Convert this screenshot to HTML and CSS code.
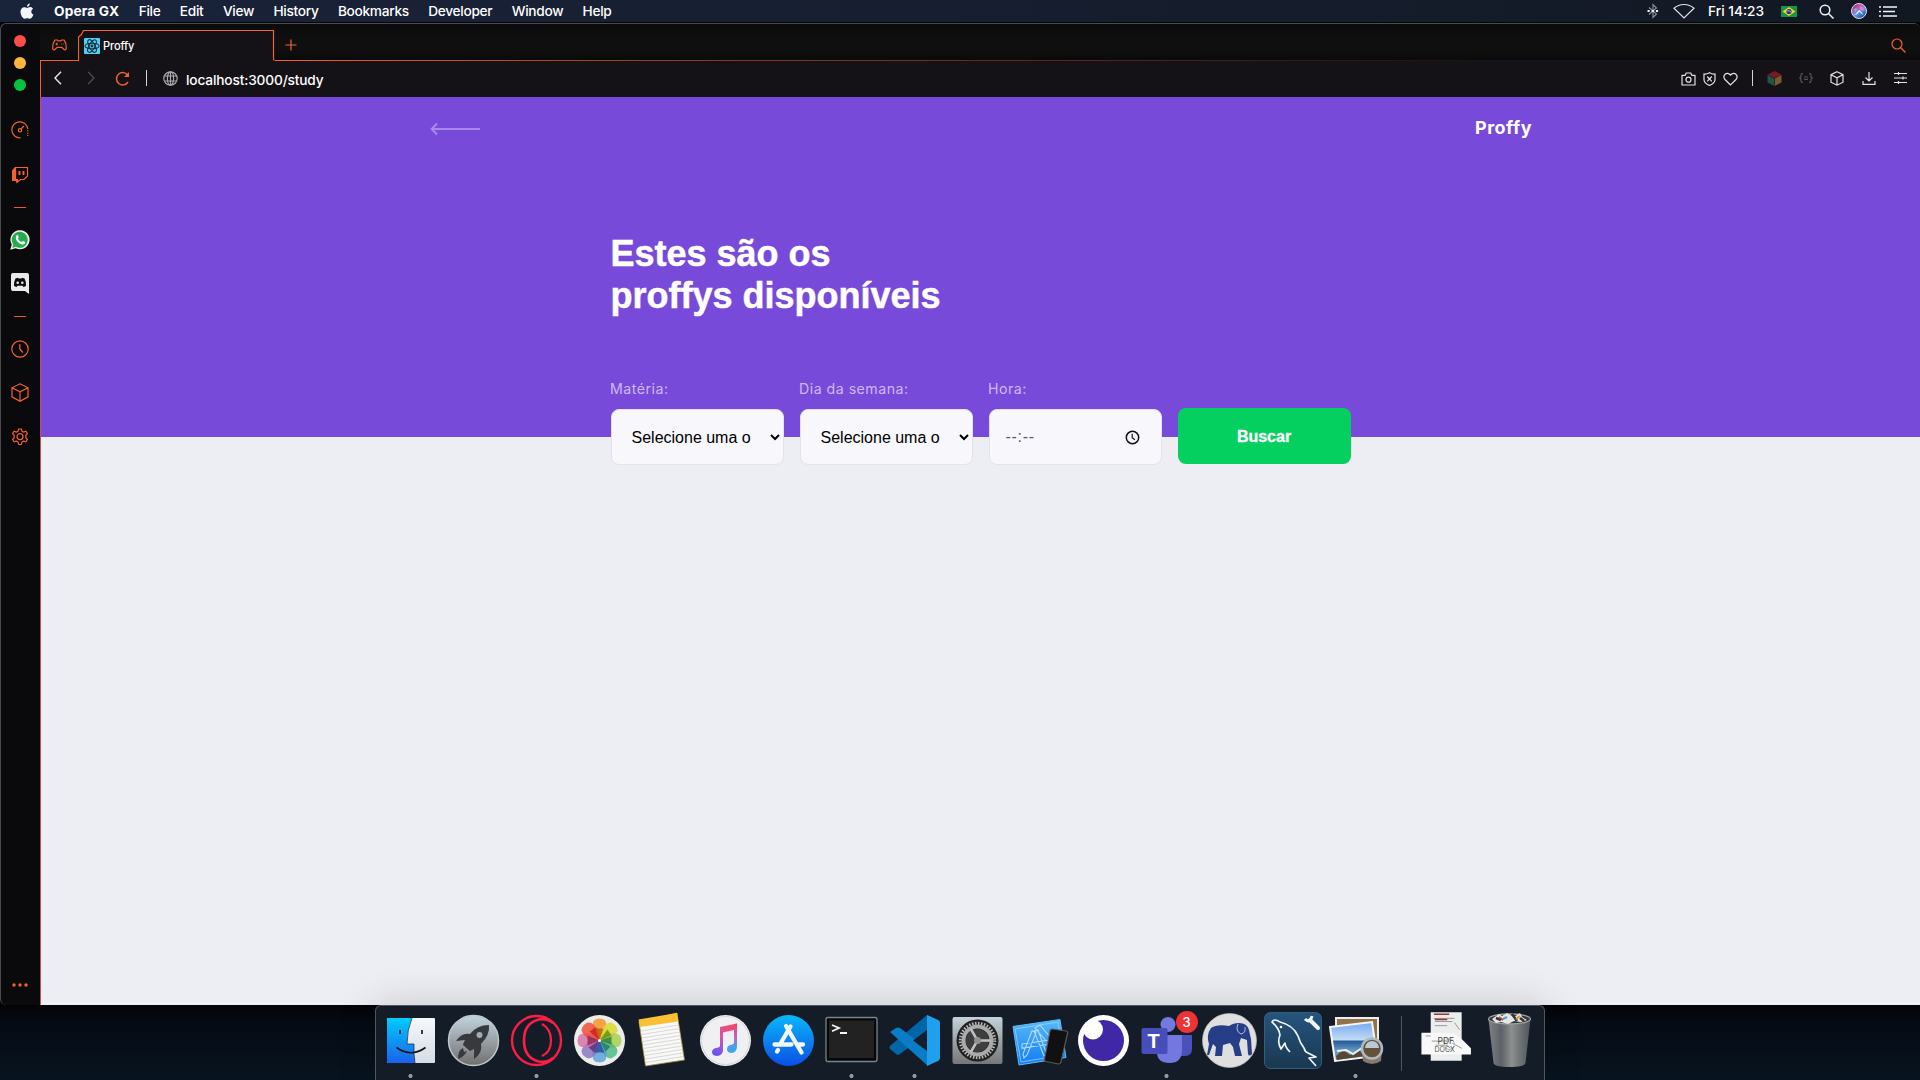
FILE: index.html
```html
<!DOCTYPE html>
<html lang="pt-BR">
<head>
<meta charset="utf-8">
<title>Proffy</title>
<link rel="stylesheet" href="styles.css">
</head>
<body>
<div class="menubar">
  <svg class="apple" width="14" height="17" viewBox="0 0 14 17"><path fill="#f2f4f8" d="M9.8.5c.1 1.600-1.200 3.200-2.800 3.300C6.800 2.200 8.300.7 9.800.5zM7.100 4.900c.7 0 1.700-.8 3-.8 1.200 0 2.300.7 2.900 1.600-2.500 1.500-2.100 4.900.5 5.900-.6 1.700-2 4.200-3.500 4.200-1 0-1.500-.6-2.700-.6s-1.700.6-2.700.6C2.700 15.900.5 12 .5 8.800.5 6 2.200 4.200 4.200 4.200c1.200 0 2.200.7 2.900.7z"/></svg>
  <b class="app">Opera GX</b><span>File</span><span>Edit</span><span>View</span><span>History</span><span>Bookmarks</span><span>Developer</span><span>Window</span><span>Help</span>
  <div class="status">
    <svg width="12" height="16" viewBox="0 0 12 16" fill="none" stroke="#8d93a0" stroke-width="1.100"><path d="M2 4.500 9.500 11 6 14.500v-13L9.500 5 2 11.500"/><path d="M.5 8h11" stroke="#f0f2f6" stroke-width="2.200" stroke-dasharray="2.200 2"/></svg>
    <svg class="wifi" width="22" height="16" viewBox="0 0 22 16" fill="none" stroke="#dfe3ea" stroke-width="1.200"><path d="M1 5.300C6.500.2 15.500.2 21 5.300L11 15z"/></svg>
    <span class="clock">Fri 14:23</span>
    <svg class="flag" width="16" height="11" viewBox="0 0 16 11"><path fill="#169447" d="M0 0h16v11H0z"/><path fill="#f5d22d" d="m8 1 6.500 4.500L8 10 1.500 5.500z"/><circle cx="8" cy="5.500" r="2.600" fill="#21357e"/><path d="M5.600 4.800q3-.5 4.800 1.500" stroke="#dfe6ee" stroke-width=".7" fill="none"/></svg>
    <svg class="find" width="15" height="15" viewBox="0 0 15 15" fill="none" stroke="#f0f2f6" stroke-width="1.500"><circle cx="6" cy="6" r="4.800"/><path d="m9.500 9.500 5 5"/></svg>
    <svg class="siri" width="16" height="16" viewBox="0 0 16 16"><defs><linearGradient id="si" x1="0" y1="0" x2=".8" y2="1"><stop stop-color="#2a325e"/><stop offset=".35" stop-color="#d848ae"/><stop offset=".6" stop-color="#4ca4e8"/><stop offset="1" stop-color="#2a3a8c"/></linearGradient></defs><circle cx="8" cy="8" r="7.500" fill="url(#si)" stroke="#d9dce6"/><path d="M3 12q3-2 5-5 3 2 4.500 5-2-1-4-3.500-2 3-5.500 3.500z" fill="#fff" opacity=".95"/><path d="M9 3q4 1 4.500 5L9 7z" fill="#f078c0"/><path d="M2.500 6q2-1 4 0l-2 3z" fill="#3ed2e6"/></svg>
    <svg width="18" height="11" viewBox="0 0 18 11" stroke="#f4f6fa" stroke-width="1.700"><path d="M0 1h2M4 1h14M0 5.500h2M4 5.500h12M0 10h2M4 10h14"/></svg>
  </div>
</div>

<div class="window">
  <aside class="side">
    <div class="lights"><i class="red"></i><i class="yellow"></i><i class="green"></i></div>
    <svg class="s1" width="18" height="18" viewBox="0 0 18 18"><path d="M9.500 16.800A8 8 0 1 1 16.800 8"/><path d="M16.800 9v6" stroke-dasharray="1.200 1.300"/><circle cx="9" cy="9.300" r="1.700"/><path d="m10.200 8 2.600-3"/></svg>
    <svg class="s2" width="18" height="18" viewBox="0 0 18 18"><path d="M4.500 1.500h12v8.500l-3.500 3.500H9.500L6.500 16v-2.500h-2z"/><path fill="#f2622f" stroke="none" d="M1 4.500 4 1v12.500h2V16l-1 1.500V15H1z"/><path d="M8.500 5v4M12.500 5v4" stroke-width="1.900"/></svg>
    <i class="dash d1"></i>
    <svg class="s3" width="20" height="20" viewBox="0 0 20 20" stroke="none"><path fill="#eee" d="M.3 19.700 1.700 14.600A9.600 9.600 0 1 1 5.600 18.300z"/><path fill="#27ab50" d="m2.300 17.700.9-3.300A8 8 0 1 1 5.900 16.800z"/><path fill="#fff" d="M6.600 5.200c.4-.4 1.100-.4 1.300 0l.9 2c.1.400-.6 1-.9 1.400.9 1.700 2 2.800 3.800 3.500.4-.4.900-1.300 1.300-1.100l2 1c.5.400-.2 1.700-.8 2.100-3.600 2.200-10.800-4.800-7.600-8.900z"/></svg>
    <svg class="s4" width="18" height="21" viewBox="0 0 18 21" stroke="none"><path fill="#e9e9eb" d="M2 0h14q2 0 2 2v19l-4-3H2q-2 0-2-2V2Q0 0 2 0z"/><path fill="#0a0a0c" d="M4.500 5.500 7 4.700l.5.800h3l.5-.8 2.500.8Q15.500 9 15 13l-2.500 1-1-1.200h-5l-1 1.200L3 13Q2.500 9 4.500 5.500z"/><circle cx="6.700" cy="9.700" r="1.300" fill="#e9e9eb"/><circle cx="11.300" cy="9.700" r="1.300" fill="#e9e9eb"/></svg>
    <i class="dash d2"></i>
    <svg class="s5" width="18" height="18" viewBox="0 0 18 18"><circle cx="9" cy="9" r="8.200"/><path d="M8.800 4v5l3 3.500"/></svg>
    <svg class="s6" width="18" height="19" viewBox="0 0 18 19"><path d="m9 .8 8 4v9l-8 4.400-8-4.400v-9zM1 4.800l8 4.100 8-4.100M9 9v9"/></svg>
    <svg class="s7" width="18" height="18" viewBox="0 0 18 18"><path d="M7.600 1h2.800l.5 2.200 1.800.9 2.100-.9 1.600 2.300-1.500 1.700v2.600l1.500 1.700-1.600 2.300-2.100-.7-1.800.9-.5 2.500H7.600l-.5-2.500-1.800-.9-2.100.7-1.600-2.300 1.500-1.700V7.200L1.600 5.500l1.600-2.300 2.100.9 1.800-.9z" stroke-linejoin="round"/><circle cx="9" cy="8.700" r="3"/></svg>
    <svg class="more" width="18" height="4" viewBox="0 0 18 4"><g fill="#f2622f" stroke="none"><circle cx="3" cy="2" r="1.700"/><circle cx="9" cy="2" r="1.700"/><circle cx="15" cy="2" r="1.700"/></g></svg>
  </aside>
  <main class="browser">
    <div class="tabs">
      <div class="pad"><svg width="15" height="12" viewBox="0 0 15 12"><path d="M3 1h2.500l.7.8h2.600l.7-.8H12q2.500 3 2.300 8.500-.8 2.500-2.800.5L9.800 8.300H5.200L3.500 10Q1.500 12 .7 9.500.5 4 3 1z"/><path d="M3.500 5h2.400M4.700 3.800v2.400M9.300 5h.8M11.300 5h.6"/></svg></div>
      <div class="tab">
        <svg class="edge" width="197" height="31" viewBox="0 0 197 31"><path fill="#151217" stroke="none" d="M.5 31V6.500l5-6h191V31z"/><path d="M.5 31V7Q4 5 5.500.5h190V28q0 2 1 2.500"/></svg>
        <svg class="react" width="16" height="16" viewBox="0 0 16 16"><rect width="16" height="16" rx="1" fill="#50d0f5" stroke="none"/><g fill="none" stroke="#18323e" stroke-width="1.100"><ellipse cx="8" cy="8" rx="7" ry="2.800"/><ellipse cx="8" cy="8" rx="7" ry="2.800" transform="rotate(60 8 8)"/><ellipse cx="8" cy="8" rx="7" ry="2.800" transform="rotate(120 8 8)"/></g><circle cx="8" cy="8" r="1.400" fill="#18323e" stroke="none"/></svg>
        <span>Proffy</span>
      </div>
      <div class="rest"><svg class="plus" width="12" height="12" viewBox="0 0 12 12"><path d="M6 .5v11M.5 6h11"/></svg><svg class="tabfind" width="15" height="15" viewBox="0 0 15 15"><circle cx="6" cy="6" r="5"/><path d="m9.500 9.500 5 5"/></svg></div>
    </div>
    <div class="address">
      <svg class="back" width="8" height="14" viewBox="0 0 8 14"><path d="M7 .8 1 7l6 6.200" stroke-width="1.500"/></svg>
      <svg class="fwd" width="8" height="14" viewBox="0 0 8 14"><path d="m1 .8 6 6.200-6 6.200" stroke="#55525a"/></svg>
      <svg class="reload" width="15" height="15" viewBox="0 0 15 15"><path d="M13 4.500A6.200 6.200 0 1 0 13 11" stroke="#f2622f" stroke-width="1.500"/><path d="M14 1v5H9z" fill="#f2622f" stroke="none"/></svg>
      <i class="bar"></i>
      <svg class="globe" width="15" height="15" viewBox="0 0 15 15"><g stroke="#aaa8ad"><circle cx="7.500" cy="7.500" r="6.700"/><ellipse cx="7.500" cy="7.500" rx="3.100" ry="6.700"/><path d="M1.500 5h12M1.500 10h12M7.500 1v13"/></g></svg>
      <span class="url">localhost:3000/study</span>
      <div class="tools">
        <svg width="15" height="14" viewBox="0 0 15 14"><path d="M1 3.300h3.200l1-2.300h4.600l1 2.300H14V13H1z" stroke-linejoin="round"/><circle cx="7.500" cy="7.700" r="2.500"/></svg>
        <svg class="shield" width="13" height="14" viewBox="0 0 13 14"><path d="M6.500.7q3 1.700 5.500 1.300v6Q11.500 11.500 6.500 13.400 1.500 11.500 1 8V2Q3.500 2.400 6.500.7zM4.200 4.500l4.600 4.800M8.800 4.500 4.200 9.300" stroke-width="1.200"/></svg>
        <svg class="heart" width="15" height="14" viewBox="0 0 15 14"><path d="M7.500 13 2 7.500C-1 4 3.500-1.500 7.500 3 11.500-1.500 16 4 13 7.500z" stroke-width="1.200"/></svg>
        <i class="bar"></i>
        <svg class="cube" width="15" height="15" viewBox="0 0 15 15" stroke="none"><path fill="#741b27" d="m7.500 0 7 3.500-7 3.700L.5 3.500z"/><path fill="#205449" d="m.5 4 6.700 3.500V15L.5 11.500z"/><path fill="#775931" d="M14.500 4 7.800 7.500V15l6.700-3.500z"/></svg>
        <svg class="brace" width="14" height="10" viewBox="0 0 14 10"><path d="M4 .7H3q-1 0-1 1.300v2L.7 5 2 6v2q0 1.300 1 1.300h1M10 .7h1q1 0 1 1.300v2l1.300 1L12 6v2q0 1.300-1 1.300h-1M5 4h4M5 6.300h4" stroke="#55535a"/></svg>
        <svg class="box" width="14" height="15" viewBox="0 0 14 15"><path d="m7 .7 6 3v7.500l-6 3-6-3V3.700zM1 3.700l6 3.200 6-3.200M7 7v7"/></svg>
        <svg class="down" width="14" height="13" viewBox="0 0 14 13"><path d="M7 0v9M3.500 5.500 7 9l3.500-3.500M1 9v3.400h12V9"/></svg>
        <svg class="sliders" width="13" height="12" viewBox="0 0 13 12"><path d="M0 1.500h13M0 6h13M0 10.500h13M4.500 0v3M9 4.500v3M4.500 9v3"/></svg>
      </div>
    </div>
    <div class="page">
      <header class="hero">
        <div class="topbar">
          <svg width="50" height="14" viewBox="0 0 50 14"><path d="M50 7H2M7 1.500 1.700 7 7 12.500" fill="none" stroke="#a78ae8" stroke-width="2"/></svg>
          <span class="logo">Proffy</span>
        </div>
        <div class="content">
          <h1>Estes são os<br>proffys disponíveis</h1>
          <form class="filters">
            <label>Matéria:<select><option>Selecione uma opção</option></select></label>
            <label>Dia da semana:<select><option>Selecione uma opção</option></select></label>
            <label>Hora:<span class="time"><span>--:--</span><svg width="15" height="15" viewBox="0 0 15 15" fill="none" stroke="#111" stroke-width="1.500"><circle cx="7.500" cy="7.500" r="6.200"/><path d="M7.200 3.800v4l2.700 1.900" stroke-width="1.200"/></svg></span></label>
            <button type="button">Buscar</button>
          </form>
        </div>
      </header>
    </div>
  </main>
</div>

<div class="dock">
  <svg class="ic run" viewBox="0 0 63 75"><defs><linearGradient id="f1" x1="0" y1="0" x2="0" y2="1"><stop stop-color="#00cdfc"/><stop offset="1" stop-color="#1a62ec"/></linearGradient><linearGradient id="gr" x1="0" y1="0" x2="0" y2="1"><stop stop-color="#f6f8fb"/><stop offset="1" stop-color="#d5dce6"/></linearGradient></defs><rect x="8" y="13" width="48" height="45" rx="1" fill="url(#gr)"/><path d="M9 13h24q-5 12-5 26h7q-.5 10 1 19H9q-1 0-1-1V14q0-1 1-1z" fill="url(#f1)"/><path d="M33 13q-5 12-5 26h7q-.5 10 1 19" fill="none" stroke="#235" stroke-width=".8"/><path d="M21 25v4M43 25v4" stroke="#122" stroke-width="1.700"/><path d="M17.500 42.500q14.500 10.500 29 0" fill="none" stroke="#111" stroke-width="1.700"/></svg>
  <svg class="ic" viewBox="0 0 63 75"><defs><linearGradient id="lp" x1="0" y1="0" x2="0" y2="1"><stop stop-color="#c0d4de"/><stop offset=".5" stop-color="#9aa2a5"/><stop offset="1" stop-color="#70706e"/></linearGradient></defs><circle cx="31.500" cy="35.500" r="25" fill="url(#lp)" stroke="#bfc7ca" stroke-width="1.500"/><path fill="#37393c" d="M47 20q-12 0-19 9-8-2-14 7l9-1q-2 4-2 5l7 6 4-2 0 10q9-6 7-15 9-9 8-19zM21 43q-5 2-5 11 7-3 9-8l-3 1z"/><circle cx="37.500" cy="30" r="3" fill="#a3acb0"/></svg>
  <svg class="ic run" viewBox="0 0 63 75" fill="none" stroke="#fa1e44"><circle cx="31.500" cy="35.500" r="24.500" stroke-width="2.400"/><path d="M48 18Q42 13 34 14.500 19 18 19 35.500T34 56.500Q42 58 48 53" stroke-width="2.700"/><path d="M37 19Q46 24 46 35.500T37 51" stroke-width="2.200"/></svg>
  <svg class="ic" viewBox="0 0 63 75"><circle cx="31.500" cy="35.500" r="25.500" fill="#ececea"/><g transform="translate(31.500 35.500)"><path fill="#f79a34" opacity=".9" d="M0 0-7-8v-7q0-7 7-7t7 7v7z"/><path fill="#dbdc35" opacity=".9" transform="rotate(45)" d="M0 0-7-8v-7q0-7 7-7t7 7v7z"/><path fill="#a5ce48" opacity=".8" transform="rotate(90)" d="M0 0-7-8v-7q0-7 7-7t7 7v7z"/><path fill="#48b87b" opacity=".8" transform="rotate(135)" d="M0 0-7-8v-7q0-7 7-7t7 7v7z"/><path fill="#559fdc" opacity=".8" transform="rotate(180)" d="M0 0-7-8v-7q0-7 7-7t7 7v7z"/><path fill="#8870c0" opacity=".8" transform="rotate(225)" d="M0 0-7-8v-7q0-7 7-7t7 7v7z"/><path fill="#d46da5" opacity=".8" transform="rotate(270)" d="M0 0-7-8v-7q0-7 7-7t7 7v7z"/><path fill="#ef503f" opacity=".85" transform="rotate(315)" d="M0 0-7-8v-7q0-7 7-7t7 7v7z"/><g opacity=".8"><path fill="#d51b12" d="M0 0-4-13-10-9z"/><path fill="#b8620f" d="M0 0 4-12-4-12z"/><path fill="#5a8f1c" d="m0 0 12-5-4-6z"/><path fill="#2b7d36" d="m0 0 12-4v8z"/><path fill="#24776c" d="m0 0 11 6-5 5z"/><path fill="#2c4d98" d="m0 0 5 12h-10z"/><path fill="#50347c" d="m0 0-5 12-6-5z"/><path fill="#8b2857" d="m0 0-12 5v-10z"/></g><circle r="1.500" fill="#fff"/></g></svg>
  <svg class="ic" viewBox="0 0 63 75"><path fill="#f8f8f6" stroke="#a68c38" stroke-width=".8" d="m8 17 38-9 7.500 47-39 6z"/><path fill="#fac033" d="m7.500 14.500 38.500-6.500 1.300 8.500L9 22z"/><path stroke="#cfcfd1" stroke-width=".8" d="m10 26 38-6M10.500 29.500l38-6M11 33l38-6M11.500 36.500l38-6M12 40l38-6M12.500 43.500l38-6M13 47l38-6M13.500 50.500l38-6M14 54l38-6M14.300 57.500l38-6"/></svg>
  <svg class="ic" viewBox="0 0 63 75"><defs><linearGradient id="mu" x1=".8" y1="0" x2=".3" y2="1"><stop stop-color="#f94664"/><stop offset=".5" stop-color="#d455a9"/><stop offset="1" stop-color="#6b55f5"/></linearGradient><linearGradient id="mr" x1="0" y1="0" x2="0" y2="1"><stop stop-color="#f34464"/><stop offset=".45" stop-color="#c560c0"/><stop offset=".8" stop-color="#3fa6ee"/></linearGradient></defs><circle cx="31.500" cy="35.500" r="25.500" fill="#f0f0f2"/><circle cx="31.500" cy="35.500" r="24" fill="none" stroke="#d3d4da"/><path fill="url(#mu)" d="m26 22 17-3.500v5.800L29 27.500V45q0 5-5.500 6-5.500 0-5.500-4 0-3.500 5-4.300 3-.3 3-2.200z"/><path fill="url(#mr)" d="M40 19.200 43 18.500V41q0 6-5 7-5 0-5-4 0-3.500 4.500-4.200 2.500-.3 2.500-2z"/></svg>
  <svg class="ic" viewBox="0 0 63 75"><defs><linearGradient id="as" x1="0" y1="0" x2="0" y2="1"><stop stop-color="#09b8fb"/><stop offset="1" stop-color="#0b4fe5"/></linearGradient></defs><circle cx="31.500" cy="35.500" r="25.500" fill="url(#as)"/><path fill="none" stroke="#f3f6fb" stroke-width="4.300" stroke-linecap="round" d="m33.500 21.500-10 17M29 21l15.500 26.500M17.500 39.500h17M41 39.500h5M21 45l-1 1.500"/></svg>
  <svg class="ic run" viewBox="0 0 63 75"><rect x="6" y="12.500" width="51" height="44" rx="2" fill="#060708" stroke="#798587" stroke-width="1.300"/><rect x="9" y="15.500" width="45" height="37.500" fill="#222"/><path fill="none" stroke="#f5f5f5" stroke-width="1.800" d="m12 20 7 3-7 3.200M20 28h7"/></svg>
  <svg class="ic run" viewBox="0 0 63 75"><path fill="#0066a7" d="m44 10 13 6-13 13-27 20q-2 2-4 0l-6-5q-1-2 0-3z"/><path fill="#0b7cc8" d="m7 27 6-4q2-1 4 0L45 44v17z"/><path fill="#20a0ec" d="m44 10 11 5q2 1 2 3v35q0 2-2 3l-11 5z"/><path fill="#151e2a" d="M44 25v21L30 35.500z"/></svg>
  <svg class="ic" viewBox="0 0 63 75"><defs><linearGradient id="se" x1="0" y1="0" x2="0" y2="1"><stop stop-color="#c2d2d9"/><stop offset="1" stop-color="#777"/></linearGradient></defs><rect x="6.500" y="12" width="50" height="47" rx="2" fill="url(#se)"/><circle cx="31.500" cy="35.500" r="21" fill="#202122"/><circle cx="31.500" cy="35.500" r="17.200" fill="none" stroke="#bbb" stroke-width="3" stroke-dasharray="1.500 1.500"/><circle cx="31.500" cy="35.500" r="14" fill="none" stroke="#aaa" stroke-width="4"/><circle cx="31.500" cy="35.500" r="11.500" fill="#3d3e3f"/><path stroke="#c0c0c0" stroke-width="2.500" d="M31.500 35.500h13M31.500 35.500l-7-12M31.500 35.500l-7 12"/><circle cx="31.500" cy="35.500" r="3.500" fill="#919191"/></svg>
  <svg class="ic" viewBox="0 0 63 75"><defs><linearGradient id="xc" x1="0" y1="0" x2="0" y2="1"><stop stop-color="#55bbf8"/><stop offset="1" stop-color="#147bf4"/></linearGradient></defs><path fill="url(#xc)" stroke="#57bcff" d="m4 21.500 47-7 6 38-47 7.500z"/><path d="m6 24 43-7 5 33-42 7z" fill="none" stroke="#a5d7ff" stroke-width=".7"/><g fill="none" stroke="#b0daff" stroke-width="1.100"><path d="m25 26 4-1 9 25-3 1zM27 28 18 50l-3 3-1-4 9-23 4 1zM13 39l29-4v4l-29 4zM26 23l5-3 18 22-4 3z"/></g><path fill="#111" stroke="#5d5653" stroke-width="1.200" d="m43 24 14 2q2 .5 1.500 2.500L52 57q-.5 2-2.500 2L37 56.500q-2-.5-1.500-2.500L41 26q.5-2 2-2z"/></svg>
  <svg class="ic" viewBox="0 0 63 75"><circle cx="31.500" cy="35.500" r="25.500" fill="#fff"/><circle cx="31.500" cy="35.500" r="20.500" fill="#4027a5"/><circle cx="21" cy="24.500" r="10" fill="#fff"/></svg>
  <div class="ic run teams"><svg viewBox="0 0 63 75"><path fill="#4a51bd" d="M40 30h17v14q0 7-7 7H40z"/><circle cx="33" cy="19.500" r="7.500" fill="#7479df"/><path fill="#7378e0" d="M25 30h22v15q0 13-12.500 13T22 47z"/><rect x="6.500" y="23" width="26" height="26" rx="2" fill="#474dba"/></svg><b>T</b><em>3</em></div>
  <svg class="ic" viewBox="0 0 63 75"><circle cx="31.500" cy="35.500" r="27" fill="#dfdfe0" stroke="#bbb" stroke-width=".7"/><path fill="#263d88" d="M13 23q6-4 18-2 4-3 10-3 8 0 10 7 1 5 2 9l1 15q-3 3-4 0l-1-14-6-2-2 6 3 12h-7l-2-9-3-4-7 2-1 11h-7l1-9-3-3-4 11H9l2-11q-3-9 2-16z"/><path d="M40 19q-3 7 3 10 5-1 4-7" fill="none" stroke="#dde" stroke-width=".8"/></svg>
  <svg class="ic" viewBox="0 0 63 75"><defs><linearGradient id="my" x1="0" y1="0" x2="0" y2="1"><stop stop-color="#26547e"/><stop offset="1" stop-color="#193850"/></linearGradient></defs><rect x="3.500" y="7.500" width="57" height="56" rx="6" fill="url(#my)" stroke="#316180"/><path fill="none" stroke="#edf4f8" stroke-width="1.700" stroke-linejoin="round" d="M29 47q-5-5-5-9l-4 6q-4-7-1-14-1-7-8-13 2-4 8 0 13 3 18 14 2 7 6 12 1 4 4 5l8 4-7 1 7 8"/><circle cx="20" cy="22" r="1.300" fill="#fff"/><path d="m49 15 8 8" stroke="#eef4f8" stroke-width="4" stroke-linecap="round"/><path fill="none" stroke="#eef4f8" stroke-width="3" d="M44 14q5 5 7-3"/></svg>
  <svg class="ic run" viewBox="0 0 63 75"><defs><linearGradient id="pv" x1="0" y1="0" x2="0" y2="1"><stop stop-color="#73a9f1"/><stop offset=".45" stop-color="#c0daf4"/><stop offset=".5" stop-color="#285c9b"/><stop offset=".75" stop-color="#6ba0c5"/><stop offset="1" stop-color="#8a8071"/></linearGradient></defs><path fill="#917347" stroke="#eee" stroke-width="2" d="M12 13h42v36H12z"/><path fill="url(#pv)" stroke="#f5f5f5" stroke-width="2" d="m6 22 42-5 5 34-42 5z"/><path d="m12 51 7-6 7 5 9-5 6 6-28 4z" fill="#54463a"/><path d="m13 46 9-1 7 4 9-6" stroke="#eee" fill="none" stroke-width="2"/><path d="M38 45h20l-1 11q-9 6-18 0z" fill="#88776a"/><circle cx="48" cy="43.500" r="10" fill="#66503c" stroke="#aebac1" stroke-width="2.500"/><path d="M41 43a7 7 0 0 1 14 0z" fill="#b9c9d6"/></svg>
  <i class="sep"></i>
  <div class="ic docs"><svg viewBox="0 0 63 75"><path fill="#eceded" d="M23 7h30v47H23z"/><path fill="#f8f8f8" d="M14 27h31l7 5 10 10v6H14z"/><path d="M26 13h20M27 16h17M27 20h12M18 30h5M24 35h16M28 39h12M44 37l9 5M46 17l5 7" stroke="#888" stroke-width=".8"/><path d="M26 9h15M27 14h12" stroke="#963737" stroke-width="1.500"/><circle cx="41" cy="38" r="5" fill="none" stroke="#bbb"/></svg><span>PDF</span><small>DOCX</small></div>
  <svg class="ic" viewBox="0 0 63 75"><defs><linearGradient id="tr"><stop stop-color="#8b8d8f"/><stop offset=".3" stop-color="#65696c"/><stop offset=".55" stop-color="#9a9b9b"/><stop offset="1" stop-color="#565a5d"/></linearGradient></defs><path fill="url(#tr)" d="m10.500 14 5 44q1 4 16 4t16-4l5-44z" opacity=".9"/><ellipse cx="31.500" cy="14" rx="21" ry="5" fill="#34383b" stroke="#9da0a1" stroke-width="1.300"/><path fill="#e6e6e4" d="m14 14 7-5 3 2 5-3 7 4 6-4 2 4 5 3-6 2-7-1-6 3-7-2-5 1z"/><path d="m18 13 5 2M34 9l5 7M42 13l4 3" stroke="#333" stroke-width="2.500"/><path d="m21 12 4 3" stroke="#c64237" stroke-width="2"/><path d="m25 14 4-2" stroke="#42a8d5" stroke-width="2"/><path d="m38 14 4-3" stroke="#d99a38" stroke-width="2"/></svg>
</div>
</body>
</html>
```
FILE: styles.css
```css
* { box-sizing: border-box; }
body { margin: 0; width: 1920px; height: 1080px; overflow: hidden; position: relative; background: linear-gradient(#020305 1005px, #050a12 1020px, #071420 1080px); font-family: Inter, "Liberation Sans", sans-serif; color: #fff; }
svg { display: block; flex: none; }
i { display: block; flex: none; }

.menubar { height: 23px; background: linear-gradient(90deg, #19233a, #151c2b 70%, #121822); display: flex; align-items: center; padding-left: 20px; font-size: 13.7px; font-weight: 500; letter-spacing: -.3px; gap: 19.4px; border-bottom: 1px solid #050609; }
.menubar .app { font-weight: 700; letter-spacing: .15px; margin-left: .6px; }
.status { margin-left: auto; display: flex; align-items: center; padding-right: 23px; letter-spacing: 0; }
.wifi { margin-left: 14px; }
.clock { margin-left: 13px; width: 58px; white-space: nowrap; }
.flag { margin-left: 15px; }
.find { margin-left: 22px; }
.siri { margin: 0 12px 0 17px; }

.window { height: 982px; background: #0a0a0c; border: 1px solid #484a4b; border-right-width: 0; border-bottom: 0; border-radius: 6px 6px 0 6px; display: flex; overflow: hidden; }
.side { width: 39px; padding-right: 2px; display: flex; flex-direction: column; align-items: center; }
.side svg, .tabs svg, .address svg { fill: none; stroke: #f2622f; stroke-width: 1.2; }
.side svg.s3, .side svg.s4, .address svg.cube { stroke: none; }
.lights { display: flex; flex-direction: column; gap: 10px; padding-top: 11px; }
.lights i { width: 12px; height: 12px; border-radius: 50%; }
.red { background: #ff4e4a; } .yellow { background: #fdb63c; } .green { background: #02c440; }
.s1 { margin-top: 30px; }
.s2 { margin-top: 27px; }
.dash { width: 12px; height: 1px; background: #e85b2c; }
.d1 { margin-top: 23px; }
.s3 { margin-top: 22px; }
.s4 { margin-top: 23px; }
.d2 { margin-top: 22px; }
.s5 { margin-top: 23px; }
.s6 { margin-top: 25px; }
.s7 { margin-top: 26px; }
.more { margin: auto 0 18px; }

.browser { flex: 1; display: flex; flex-direction: column; min-width: 0; }
.tabs { height: 37px; display: flex; background: linear-gradient(#0b0b0c, #101011 60%, #0a0a0a); }
.pad { width: 38px; border-bottom: 1px solid #f2622f; padding: 15px 0 0 12px; }
.tab { width: 197px; position: relative; display: flex; align-items: center; padding: 6px 0 0 6px; gap: 3px; font-size: 11.1px; font-weight: 500; letter-spacing: -.15px; }
.tab .edge { position: absolute; left: 0; top: 6px; }
.tab .react { position: relative; }
.tab span { position: relative; }
.rest { flex: 1; display: flex; justify-content: space-between; padding: 14px 14px 0 10px; border-bottom: 1px solid; border-image: linear-gradient(90deg, #f2622f, #8a3c20 25%, #151217 75%) 1; }
.plus { margin-top: 1px; }
.address { height: 36px; background: #151217; border-left: 1px solid #f2622f; display: flex; align-items: center; padding: 0 13px 2px 13px; }
.address svg { stroke: #e2e1e6; }
.fwd { margin-left: 25px; }
.reload { margin-left: 20px; }
.bar { width: 1px; height: 16px; background: #d6d4d9; }
.address > .bar { margin: 0 16px 0 16px; }
.globe { margin-top: 1px; }
.url { margin-left: 8px; font-size: 13.7px; font-weight: 500; letter-spacing: -.15px; padding-top: 3px; }
.tools { margin-left: auto; display: flex; align-items: center; }
.tools svg:first-child, .shield, .heart { margin-top: 1px; }
.shield { margin-left: 7px; }
.heart { margin-left: 7px; }
.tools .bar { margin: 0 14px 0 14px; }
.brace { margin-left: 17px; }
.box { margin-left: 17px; }
.down { margin-left: 18px; }
.sliders { margin-left: 18px; }

.page { flex: 1; background: #edeef3; border-left: 1px solid #c05055; }
.hero { height: 340px; background: #774ad9; }
.topbar { width: 1101px; margin: 0 auto; padding-top: 20px; height: 44px; display: flex; justify-content: space-between; align-items: center; }
.logo { font: 700 18px/24px Inter, sans-serif; letter-spacing: .5px; padding-bottom: 2px; margin-right: -1px; }
.content { width: 740px; margin: 0 auto; padding-top: 92px; }
h1 { margin: 0; font: 700 36px/42px "Liberation Sans", sans-serif; height: 84px; -webkit-text-stroke: .5px #fff; }
.filters { margin-top: 62px; display: grid; grid-template-columns: repeat(4, 173px); column-gap: 16px; align-items: end; }
label { font: 400 14.2px/20px Inter, sans-serif; color: #cdb8f4; letter-spacing: .48px; white-space: nowrap; margin-left: -.5px; }
select, .time { display: flex; width: 173px; height: 56px; margin: 10px 0 0 .5px; border: 1px solid #e3e2ee; border-radius: 8px; background: #f7f7fc; color: #000; font: 16px "Liberation Sans", sans-serif; padding: 0 16px; letter-spacing: 0; }
.time { align-items: center; justify-content: space-between; padding-right: 21px; color: #5f5670; letter-spacing: .7px; }
button { height: 56px; border: 0; padding: 2px 0 0; margin-bottom: 1px; border-radius: 8px; background: #04d060; color: #fff; font: 700 16px "Liberation Sans", sans-serif; -webkit-text-stroke: .3px #fff; }

.dock { position: absolute; left: 375px; top: 1005px; width: 1170px; height: 76px; background: #141c27; border: 1px solid #53575d; border-bottom: 0; border-radius: 6px 6px 0 0; display: flex; padding-left: 2.5px; box-shadow: 0 0 40px rgba(0, 0, 0, .16); }
.ic { width: 63px; height: 75px; flex: none; }
.dock > .ic { margin-top: -1px; }
.run { background: radial-gradient(circle at 31.5px 71px, #959ba4 1.7px, transparent 2.4px); }
.teams, .docs { position: relative; }
.teams b { position: absolute; left: 13px; top: 24px; font: 700 20px/24px "Liberation Sans", sans-serif; }
.teams em { position: absolute; left: 41px; top: 6px; width: 22px; height: 22px; border-radius: 50%; background: #ed3434; text-align: center; font: 500 13px/22px Inter, sans-serif; }
.sep { width: 1px; height: 55px; background: #4f565f; margin: 10px 7px 0 14px; }
.docs + .ic { margin-left: 6px; }
.docs svg { margin-left: -2px; }
.docs span { position: absolute; left: 29px; top: 31px; font: 8.5px/10px Inter, sans-serif; color: #444; }
.docs small { position: absolute; left: 26px; top: 41px; font: 7px/8px Inter, sans-serif; color: #555; }
```
